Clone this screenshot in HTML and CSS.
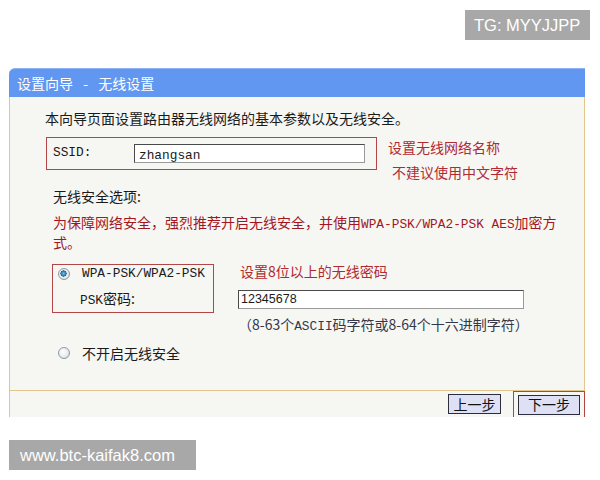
FILE: index.html
```html
<!DOCTYPE html>
<html lang="zh-CN">
<head>
<meta charset="utf-8">
<title>设置向导 - 无线设置</title>
<link rel="stylesheet" href="styles.css">
</head>
<body>
<div class="page">
  <div class="topbar">
    <div class="tag tag-tg">TG: MYYJJPP</div>
  </div>

  <div class="panel">
    <div class="panel-title">设置向导 - 无线设置</div>
    <div class="panel-body">
      <p class="intro">本向导页面设置路由器无线网络的基本参数以及无线安全。</p>

      <div class="ssid-row">
        <div class="frame ssid-frame">
          <span class="ssid-label mono">SSID:</span>
          <div class="field ssid-field"><span class="mono">zhangsan</span></div>
        </div>
        <div class="note">
          <div>设置无线网络名称</div>
          <div class="note-indent">不建议使用中文字符</div>
        </div>
      </div>

      <div class="sec-label">无线安全选项:</div>
      <p class="warn"><span>为保障网络安全，强烈推荐开启无线安全，并使用<span class="mono">WPA-PSK/WPA2-PSK AES</span>加密方</span><br><span>式。</span></p>

      <div class="wpa-row">
        <div class="frame wpa-frame">
          <div class="opt-line">
            <span class="radio checked"></span>
            <span class="mono">WPA-PSK/WPA2-PSK</span>
          </div>
          <div class="psk-line"><span class="mono">PSK</span>密码:</div>
        </div>
        <div class="wpa-side">
          <div class="note note-pwd">设置8位以上的无线密码</div>
          <div class="field psk-field">12345678</div>
          <div class="hint">（8-63个<span class="mono">ASCII</span>码字符或8-64个十六进制字符）</div>
        </div>
      </div>

      <div class="off-row">
        <span class="radio"></span>
        <span>不开启无线安全</span>
      </div>
    </div>
    <div class="panel-foot">
      <button class="btn btn-prev" type="button">上一步</button>
      <div class="btn-mark">
        <button class="btn btn-next" type="button">下一步</button>
      </div>
    </div>
  </div>

  <div class="tag tag-site">www.btc-kaifak8.com</div>
</div>
</body>
</html>
```

FILE: styles.css
```css
html, body {
  margin: 0;
  padding: 0;
  background: #ffffff;
}

.page {
  width: 600px;
  height: 480px;
  overflow: hidden;
  font-family: "Noto Sans CJK SC", "Liberation Sans", sans-serif;
  font-size: 14px;
  color: #1a1a1a;
}

/* latin runs set in a fixed-width face, kept from growing the line box */
.mono {
  font-family: "Liberation Mono", "Noto Sans CJK SC", monospace;
  font-size: 12.8px;
  line-height: 1;
}

/* grey caption tags */
.topbar {
  height: 68px;
  box-sizing: border-box;
  padding: 10px 10px 0 0;
  display: flex;
  justify-content: flex-end;
  align-items: flex-start;
}

.tag {
  background: #a8a8a8;
  color: #ffffff;
  font-family: "Liberation Sans", "Noto Sans", sans-serif;
  font-size: 16.5px;
  height: 30px;
  line-height: 30px;
  box-sizing: border-box;
}

.tag-tg {
  width: 125px;
  padding-left: 9px;
}

.tag-site {
  width: 187px;
  margin: 23px 0 0 9px;
  padding-left: 11px;
}

/* wizard panel */
.panel {
  margin-left: 9px;
  width: 576px;
}

.panel-title {
  height: 29px;
  line-height: 28px;
  box-sizing: border-box;
  padding-left: 8px;
  background: #6197f0;
  border-top: 1px solid #8db3f4;
  border-top-left-radius: 6px;
  color: #ffffff;
  font-size: 14px;
  word-spacing: 7px;
}

.panel-body {
  height: 294px;
  box-sizing: border-box;
  padding: 11px 0 0 35px;
  background: #f6f6f3;
  border-left: 1px solid #e3c68c;
  border-right: 1px solid #e3c68c;
  border-bottom: 1px solid #e3c68c;
}

.intro {
  margin: 0;
  line-height: 20px;
}

.frame {
  border: 1px solid #b34646;
  box-sizing: border-box;
}

.field {
  box-sizing: border-box;
  height: 19px;
  line-height: 17px;
  background: #ffffff;
  border: 1px solid #4a4a4a;
  border-right-color: #9a9a9a;
  border-bottom-color: #9a9a9a;
  padding-left: 4px;
}

.ssid-row {
  display: flex;
  align-items: flex-start;
  margin-top: 9px;
}

.ssid-frame {
  margin-left: 1px;
  width: 331px;
  height: 33px;
  display: flex;
  align-items: center;
  padding-left: 6px;
}

.ssid-label {
  width: 81px;
}

.ssid-field {
  width: 231px;
}

.note {
  color: #b02a32;
  font-size: 14px;
  line-height: 25px;
  margin: -2px 0 0 11px;
}

.note-indent {
  padding-left: 4px;
}

.sec-label {
  margin: 1px 0 0 8px;
  line-height: 20px;
}

.warn {
  margin: 6px 0 0 8px;
  line-height: 20px;
  color: #a3161f;
}

.wpa-row {
  display: flex;
  align-items: flex-start;
  margin-top: 12px;
}

.wpa-frame {
  margin-left: 7px;
  width: 162px;
  height: 49px;
}

.opt-line {
  display: flex;
  align-items: center;
  gap: 12px;
  padding-left: 5px;
  height: 16px;
  margin-top: 1px;
}

.psk-line {
  margin-top: 7px;
  padding-left: 27px;
  line-height: 18px;
}

.radio {
  width: 12px;
  height: 12px;
  border-radius: 50%;
  box-sizing: border-box;
  border: 1px solid #8d9aa6;
  background: radial-gradient(circle at 40% 40%, #ffffff 0%, #e9ebee 55%, #c9ced4 100%);
  flex: none;
}

.radio.checked {
  background:
    radial-gradient(circle at 45% 45%, #7fc0e6 0%, #2d7fb3 28%, #1f5f8c 38%, rgba(0,0,0,0) 42%),
    radial-gradient(circle at 40% 40%, #ffffff 0%, #e9ebee 55%, #c9ced4 100%);
}

.wpa-side {
  margin-left: 24px;
}

.note-pwd {
  margin: -2px 0 0 0;
  line-height: 18px;
  padding-left: 2px;
}

.psk-field {
  margin-top: 10px;
  width: 286px;
  font-family: "Liberation Sans", sans-serif;
  font-size: 12.5px;
  padding-left: 2px;
}

.hint {
  margin-top: 5px;
  line-height: 20px;
  color: #343848;
}

.off-row {
  margin: 9px 0 0 13px;
  display: flex;
  align-items: center;
  gap: 12px;
  line-height: 20px;
}

.panel-foot {
  height: 26px;
  box-sizing: border-box;
  background: #f6f6f3;
  border-left: 1px solid #e3c68c;
  border-right: 1px solid #e3c68c;
  display: flex;
  justify-content: flex-end;
  align-items: flex-start;
}

.btn {
  font-family: "Noto Sans CJK SC", sans-serif;
  font-size: 14px;
  color: #111111;
  background: #dee0f5;
  border: 1px solid #2c2c3a;
  height: 20px;
  line-height: 17px;
  padding: 0;
  margin: 0;
}

.btn-prev {
  width: 53px;
  margin-top: 3px;
}

.btn-mark {
  margin-left: 12px;
  height: 26px;
  box-sizing: border-box;
  border: 1px solid #b04444;
  border-bottom: none;
  padding: 2px 4px 0 4px;
  margin-right: -1px;
}

.btn-next {
  width: 62px;
}
```
